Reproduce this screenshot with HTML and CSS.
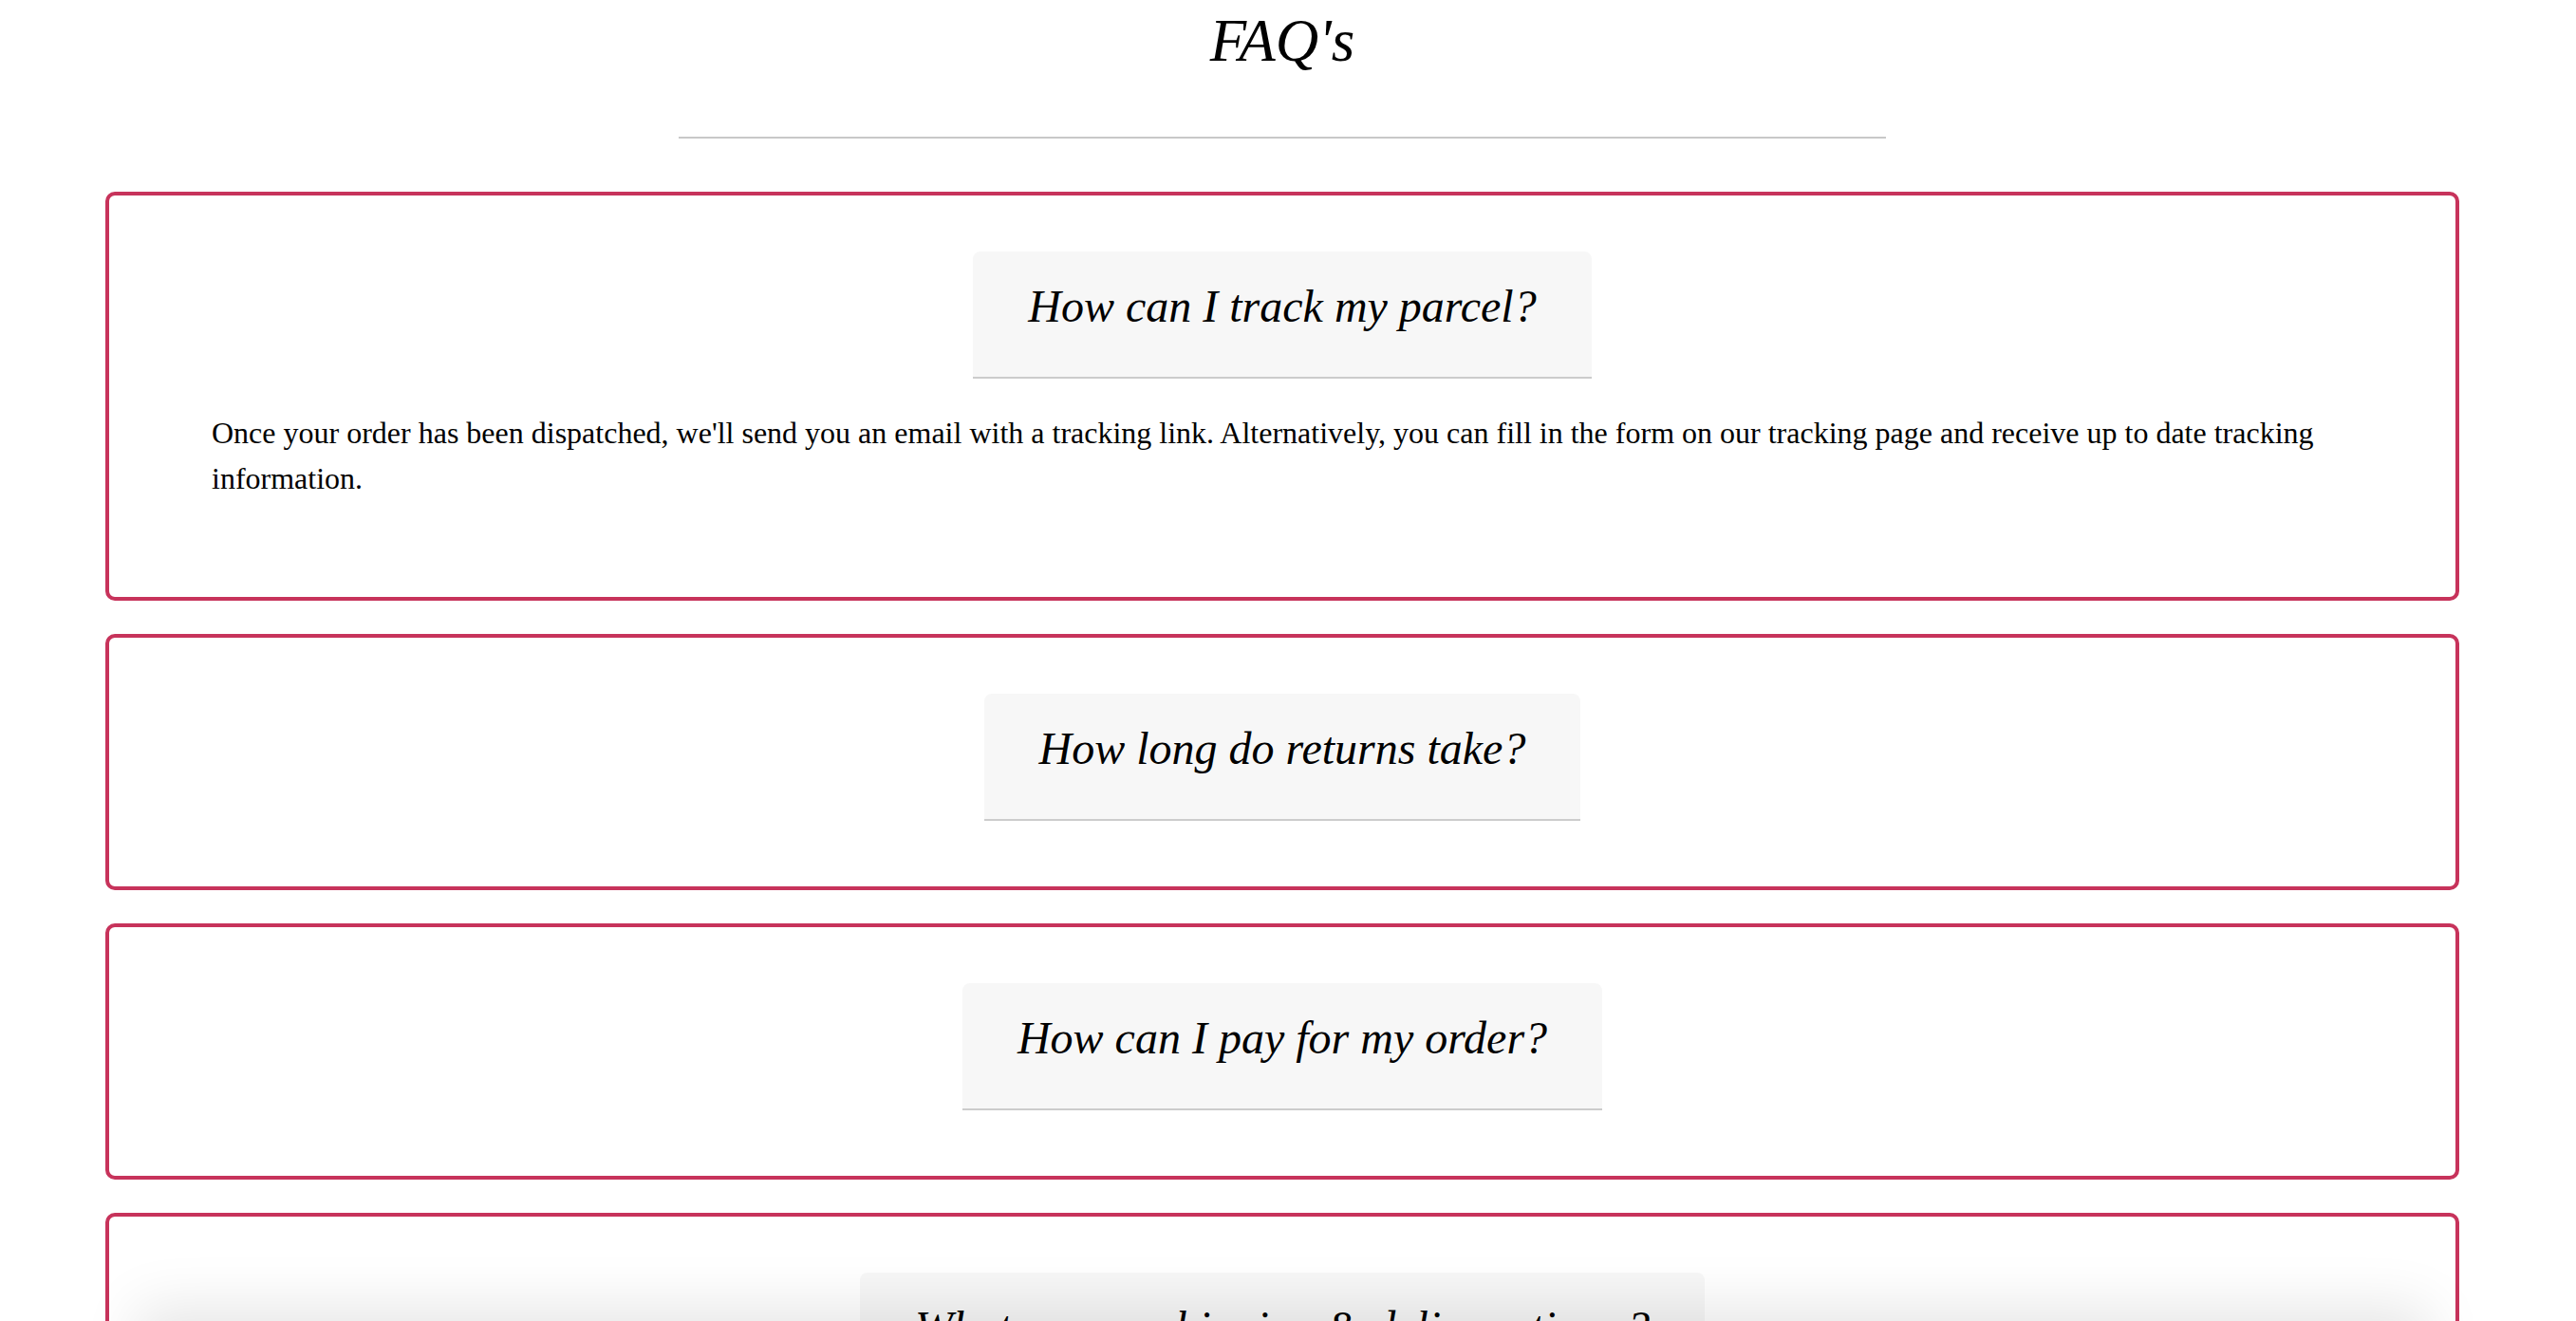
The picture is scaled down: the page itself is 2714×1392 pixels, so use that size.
FILE: index.html
```html
<!DOCTYPE html>
<html lang="en">
<head>
<meta charset="utf-8">
<title>FAQ's</title>
<link rel="stylesheet" href="styles.css">
</head>
<body>
<main class="page">
  <h1 class="page-title">FAQ's</h1>
  <hr class="divider">
  <section class="faq-list">
    <article class="faq-card">
      <h2 class="faq-question">How can I track my parcel?</h2>
      <p class="faq-answer">Once your order has been dispatched, we'll send you an email with a tracking link. Alternatively, you can fill in the form on our tracking page and receive up to date tracking information.</p>
    </article>
    <article class="faq-card">
      <h2 class="faq-question">How long do returns take?</h2>
    </article>
    <article class="faq-card">
      <h2 class="faq-question">How can I pay for my order?</h2>
    </article>
    <article class="faq-card">
      <h2 class="faq-question">What are my shipping &amp; delivery times?</h2>
    </article>
  </section>
</main>
<div class="bottom-shade"></div>
</body>
</html>
```

FILE: styles.css
```css
html, body {
  margin: 0;
  padding: 0;
  background: #ffffff;
}

body {
  font-family: "Liberation Serif", "Times New Roman", serif;
  color: #000000;
}

.page {
  width: 2702px;
  display: flex;
  flex-direction: column;
  align-items: center;
}

.page-title {
  margin: 8px 0 0;
  font-size: 63px;
  font-style: italic;
  font-weight: normal;
  line-height: 71px;
}

.divider {
  width: 1272px;
  height: 0;
  margin: 65px 0 0;
  border: none;
  border-top: 2px solid #c8c8c8;
}

.faq-list {
  align-self: stretch;
  margin: 56px 111px 0;
  display: flex;
  flex-direction: column;
  gap: 35px;
}

.faq-card {
  border: 4px solid #c7335b;
  border-radius: 10px;
  padding: 59px 0 69px;
  display: flex;
  flex-direction: column;
  align-items: center;
}

.faq-question {
  margin: 0;
  padding: 31px 58px 47px;
  background: #f7f7f7;
  border-bottom: 2px solid #cccccc;
  border-radius: 8px 8px 0 0;
  font-size: 48px;
  line-height: 54px;
  font-style: italic;
  font-weight: normal;
}

.faq-answer {
  align-self: stretch;
  margin: 33px 0 32px;
  padding: 0 108px;
  font-size: 32px;
  line-height: 48px;
}

.bottom-shade {
  position: fixed;
  left: 160px;
  right: 170px;
  top: 100%;
  height: 100px;
  box-shadow: 0 0 60px 15px rgba(0, 0, 0, 0.10);
  pointer-events: none;
}
```
